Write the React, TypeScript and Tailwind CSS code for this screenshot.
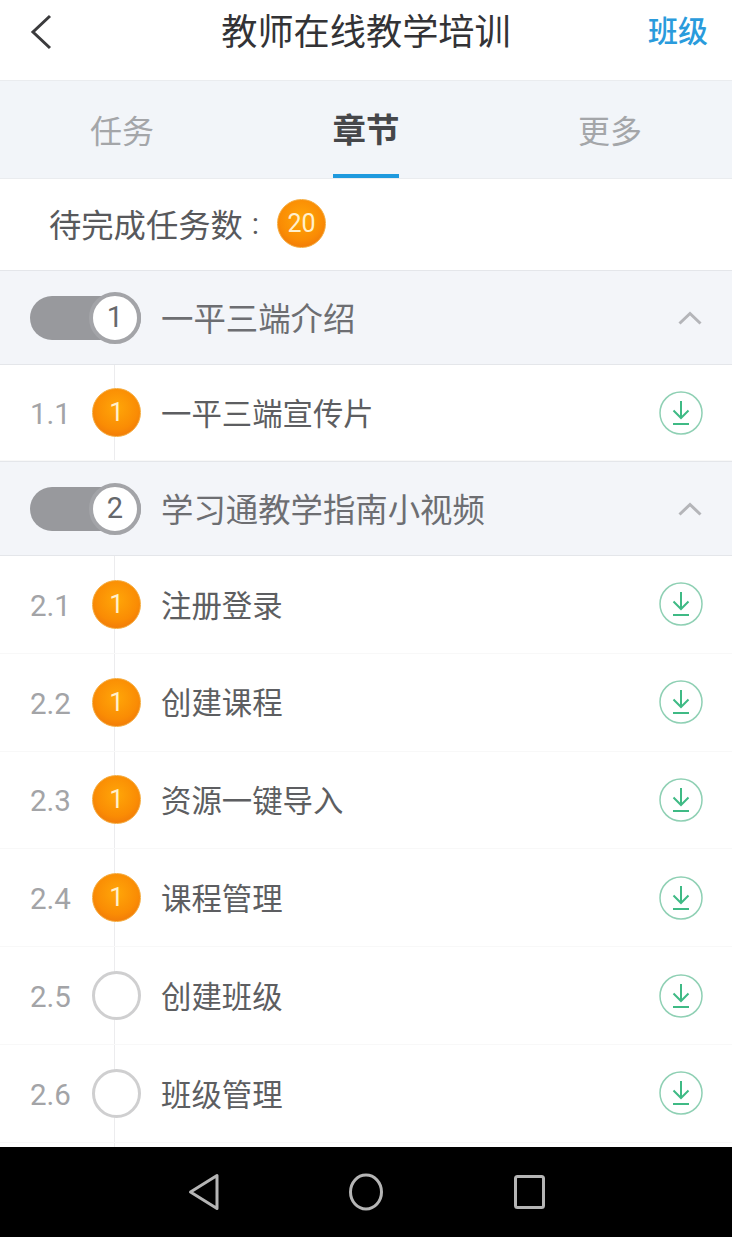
import { Fragment } from "react";

type Lesson = { num: string; title: string; done: boolean; short?: boolean };
type Chapter = { num: number; title: string; lessons: Lesson[] };

const CHAPTERS: Chapter[] = [
  {
    num: 1,
    title: "一平三端介绍",
    lessons: [{ num: "1.1", title: "一平三端宣传片", done: true, short: true }],
  },
  {
    num: 2,
    title: "学习通教学指南小视频",
    lessons: [
      { num: "2.1", title: "注册登录", done: true },
      { num: "2.2", title: "创建课程", done: true },
      { num: "2.3", title: "资源一键导入", done: true },
      { num: "2.4", title: "课程管理", done: true },
      { num: "2.5", title: "创建班级", done: false },
      { num: "2.6", title: "班级管理", done: false },
    ],
  },
];

const badgeClass =
  "w-[49px] h-[49px] rounded-full bg-[radial-gradient(circle_at_50%_40%,#ffa608_0%,#fa8c04_58%,#e96c0e_100%)] border border-[#f5ab3c] flex items-center justify-center font-['Roboto',sans-serif] text-[#fff0cc] shrink-0";

function ChapterRow({ chapter }: { chapter: Chapter }) {
  return (
    <div className="h-[95px] shrink-0 flex items-center bg-[#f3f5f9] border-y border-[#e4e6ea] pl-[30px] pr-[30px]">
      <div className="relative w-[111px] h-[44px] rounded-full bg-[#98999d] shrink-0">
        <div className="absolute right-0 top-[-4px] w-[52px] h-[52px] rounded-full bg-white border-[4px] border-[#a3a4a8] flex items-center justify-center font-['Roboto',sans-serif] text-[29px] text-[#66686c]">
          {chapter.num}
        </div>
      </div>
      <span className="ml-[20px] pb-[1px] text-[32.4px] text-[#6d6e72]">{chapter.title}</span>
      <svg className="ml-auto" width="24" height="14" viewBox="0 0 24 14" fill="none">
        <path d="M1.5 12.5 L12 2.5 L22.5 12.5" stroke="#b4b5b9" strokeWidth="3" />
      </svg>
    </div>
  );
}

function LessonRow({ lesson }: { lesson: Lesson }) {
  return (
    <div
      className={`relative shrink-0 flex items-center bg-white border-b border-[#f8f8f8] pl-[30px] pr-[29px] ${
        lesson.short ? "h-[96px]" : "h-[97.8px]"
      }`}
    >
      <div className="absolute left-[114px] top-0 bottom-0 w-px bg-[#ececee]" />
      <span className="w-[62px] pt-[3px] font-['Roboto',sans-serif] text-[29.5px] text-[#a3a4a7] shrink-0">
        {lesson.num}
      </span>
      {lesson.done ? (
        <div className={`relative text-[26px] ${badgeClass}`}>1</div>
      ) : (
        <div className="relative w-[49px] h-[49px] rounded-full bg-white border-[3px] border-[#cfcfd0] shrink-0" />
      )}
      <span className="ml-[20px] text-[30.4px] text-[#5d5e61]">{lesson.title}</span>
      <svg className="ml-auto" width="44" height="44" viewBox="0 0 44 44" fill="none">
        <circle cx="22" cy="22" r="21" stroke="#8fd0b4" strokeWidth="1.5" />
        <path d="M22 10 V26 M14.5 19.5 L22 27 L29.5 19.5" stroke="#3fba85" strokeWidth="2" />
        <path d="M14 33 H30" stroke="#3fba85" strokeWidth="2" />
      </svg>
    </div>
  );
}

export default function App() {
  return (
    <div className="w-[732px] h-[1237px] flex flex-col overflow-hidden bg-white font-['Noto_Sans_CJK_SC',sans-serif]">
      {/* title bar */}
      <div className="h-[80px] shrink-0 grid grid-cols-[1fr_auto_1fr] items-center px-[24px] pb-[16px] bg-white">
        <svg className="ml-[6px]" width="22" height="36" viewBox="0 0 22 36" fill="none">
          <path d="M20 2 L3 18 L20 34" stroke="#3b3b3d" strokeWidth="3" />
        </svg>
        <span className="pb-[5px] text-[36.2px] text-[#333336]">教师在线教学培训</span>
        <span className="justify-self-end pb-[5px] text-[30px] font-medium text-[#2a9bdc]">班级</span>
      </div>

      {/* tabs */}
      <div className="h-[99px] shrink-0 grid grid-cols-3 bg-[#f2f5f9] border-y border-[#eaecef]">
        <div className="flex items-center justify-center pb-[2px] text-[32px] text-[#a4a6a9]">任务</div>
        <div className="relative flex items-center justify-center pb-[2px] text-[33.5px] font-bold text-[#46474a]">
          章节
          <div className="absolute left-1/2 -translate-x-1/2 bottom-0 w-[66px] h-[4px] bg-[#1f9ade]" />
        </div>
        <div className="flex items-center justify-center pb-[2px] text-[32px] text-[#a4a6a9]">更多</div>
      </div>

      {/* pending count */}
      <div className="h-[91px] shrink-0 flex items-center pl-[49px] pb-[2px] bg-white">
        <span className="text-[32.3px] text-[#58595c]">待完成任务数</span>
        <span className="ml-[9px] font-['Roboto',sans-serif] text-[30px] text-[#58595c]">:</span>
        <div className={`ml-[18px] text-[25px] ${badgeClass}`}>20</div>
      </div>

      {/* chapter list */}
      <div className="flex-1 min-h-0 flex flex-col overflow-hidden">
        {CHAPTERS.map((chapter) => (
          <Fragment key={chapter.num}>
            <ChapterRow chapter={chapter} />
            {chapter.lessons.map((lesson) => (
              <LessonRow key={lesson.num} lesson={lesson} />
            ))}
          </Fragment>
        ))}
        <div className="relative flex-1">
          <div className="absolute left-[114px] top-0 bottom-0 w-px bg-[#ececee]" />
        </div>
      </div>

      {/* android nav bar */}
      <div className="h-[90px] shrink-0 bg-black flex items-center">
        <div className="ml-[188px] flex items-center gap-[129px]">
          <svg width="32" height="38" viewBox="0 0 32 38" fill="none">
            <path d="M29 2.5 V35.5 L2.5 19 Z" stroke="#b5b5b5" strokeWidth="3" strokeLinejoin="round" />
          </svg>
          <svg width="34" height="38" viewBox="0 0 34 38" fill="none">
            <ellipse cx="17" cy="19" rx="15.5" ry="17" stroke="#b5b5b5" strokeWidth="3" />
          </svg>
          <svg width="31" height="34" viewBox="0 0 31 34" fill="none" className="ml-[2px]">
            <rect x="1.5" y="1.5" width="28" height="31" rx="2" stroke="#b5b5b5" strokeWidth="3" />
          </svg>
        </div>
      </div>
    </div>
  );
}
